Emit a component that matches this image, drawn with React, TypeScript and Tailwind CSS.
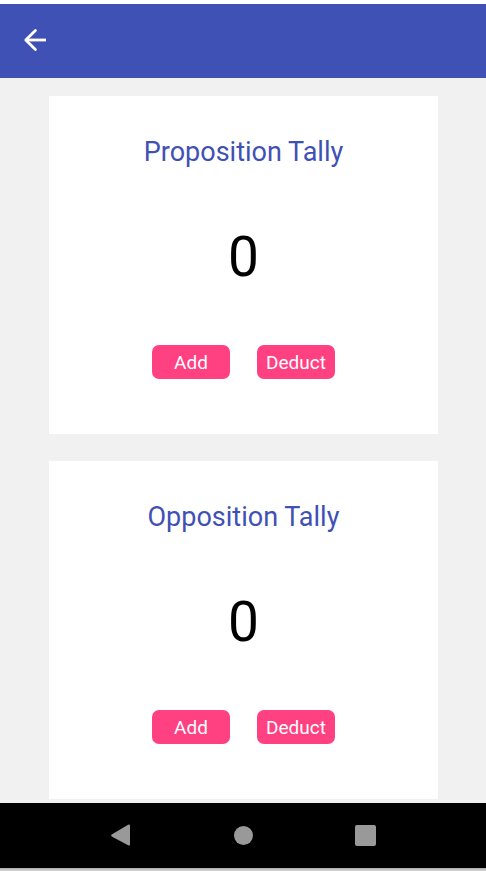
import { useState } from "react";

const buttonClass =
  "h-[34px] w-[78px] rounded-[7px] bg-[#ff4081] pt-0.5 text-center text-[19px] leading-8 text-white";

function TallyCard({ title }: { title: string }) {
  const [count, setCount] = useState(0);
  return (
    <section className="flex shrink-0 flex-col items-center bg-white pt-[38px] pb-[55px]">
      <h2 className="text-[27px] leading-9 text-[#3f51b5]">{title}</h2>
      <output className="mt-[55px] text-[55px] leading-16 text-black">{count}</output>
      <div className="mt-14 flex gap-[27px]">
        <button type="button" className={buttonClass} onClick={() => setCount(count + 1)}>
          Add
        </button>
        <button type="button" className={buttonClass} onClick={() => setCount(count - 1)}>
          Deduct
        </button>
      </div>
    </section>
  );
}

export default function App() {
  return (
    <div className="flex h-screen flex-col overflow-hidden bg-white pt-1 font-[Roboto,sans-serif]">
      <header className="flex h-[74px] shrink-0 items-center bg-[#3f51b5] pb-0.5 pl-[19px]">
        <button type="button" aria-label="Back" className="text-white">
          <svg viewBox="0 0 32 32" className="size-8" fill="none" stroke="currentColor" strokeWidth="2.8">
            <path d="M27 16H7" />
            <path d="M16.4 6.6 6.8 16l9.6 9.4" strokeLinecap="round" strokeLinejoin="round" />
          </svg>
        </button>
      </header>
      <main className="flex min-h-0 flex-1 flex-col gap-[27px] overflow-hidden bg-[#f1f1f1] pt-[18px] pr-12 pl-[49px]">
        <TallyCard title="Proposition Tally" />
        <TallyCard title="Opposition Tally" />
      </main>
      <nav className="flex h-[65px] shrink-0 items-center justify-center gap-[102px] bg-black text-[#999999]">
        <button type="button" aria-label="Back">
          <svg viewBox="0 0 21 23" className="h-[23px] w-[21px]" fill="currentColor">
            <path d="M.7 10.6 17.1.7Q19-.1 19 1.8V20.2Q19 22.1 17.1 21.3L.7 12.4Q-.3 11.5 .7 10.6Z" />
          </svg>
        </button>
        <button type="button" aria-label="Home" className="size-[19px] rounded-full bg-[#999999]" />
        <button type="button" aria-label="Recent apps" className="size-[21px] rounded-xs bg-[#999999]" />
      </nav>
      <div className="h-[3px] shrink-0 bg-linear-to-b from-[#aaaaaa] to-[#d8d8d8]" />
    </div>
  );
}
